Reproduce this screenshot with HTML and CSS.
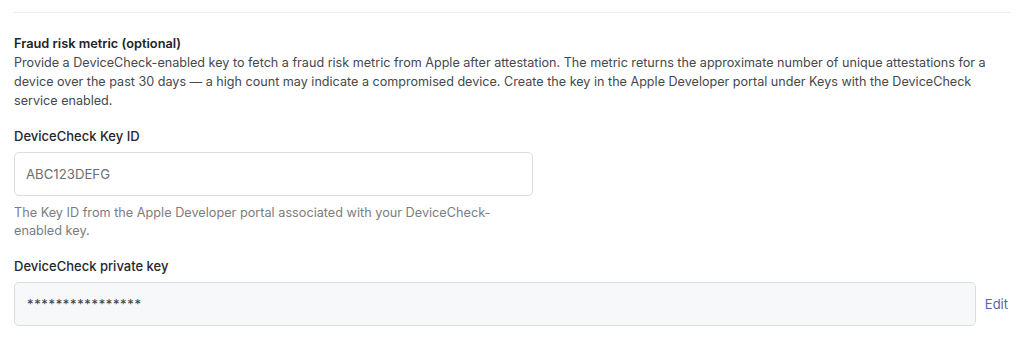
FILE: index.html
```html
<!DOCTYPE html>
<html lang="en">
<head>
<meta charset="utf-8">
<title>Fraud risk metric</title>
<link rel="stylesheet" href="styles.css">
</head>
<body>
<div class="page">
  <hr class="divider">
  <section class="section">
    <h3 class="section-title">Fraud risk metric (optional)</h3>
    <p class="section-desc">Provide a DeviceCheck-enabled key to fetch a fraud risk metric from Apple after attestation. The metric returns the approximate number of unique attestations for a device over the past 30 days — a high count may indicate a compromised device. Create the key in the Apple Developer portal under Keys with the DeviceCheck service enabled.</p>

    <div class="field">
      <label class="field-label">DeviceCheck Key ID</label>
      <div class="input input-short">ABC123DEFG</div>
      <p class="field-help">The Key ID from the Apple Developer portal associated with your DeviceCheck-enabled key.</p>
    </div>

    <div class="field">
      <label class="field-label">DeviceCheck private key</label>
      <div class="input-row">
        <div class="input input-readonly">****************</div>
        <a class="edit-link" href="#">Edit</a>
      </div>
    </div>
  </section>
</div>
</body>
</html>
```

FILE: styles.css
```css
* { box-sizing: border-box; }

html, body {
  margin: 0;
  padding: 0;
  background: #ffffff;
}

body {
  font-family: Inter, "Noto Sans", sans-serif;
  color: #1f2328;
}

.page {
  padding: 12px 14px 0 14px;
}

.divider {
  margin: 0;
  border: 0;
  border-top: 1px solid #ececee;
}

.section {
  padding-top: 21px;
}

.section-title {
  margin: 0;
  font-size: 12.8px;
  line-height: 19px;
  font-weight: 600;
  color: #1f2328;
}

.section-desc {
  margin: 0;
  font-size: 12.6px;
  line-height: 19px;
  color: #45484d;
}

.field {
  margin-top: 17px;
}

.field-label {
  display: block;
  font-size: 13px;
  line-height: 19px;
  font-weight: 500;
  color: #24272b;
  margin-bottom: 6px;
}

.input {
  height: 44px;
  border: 1px solid #dcdde0;
  border-radius: 5px;
  padding: 0 11px;
  display: flex;
  align-items: center;
  font-size: 13.2px;
  color: #6b6e73;
  background: #ffffff;
}

.input-short {
  width: 519px;
}

.field-help {
  margin: 8px 0 0 0;
  max-width: 500px;
  font-size: 12.7px;
  line-height: 18px;
  color: #7a7d82;
}

.input-row {
  display: flex;
  align-items: center;
  gap: 9px;
}

.input-readonly {
  flex: 1;
  background: #f7f8fa;
  color: #3a3d42;
  font-size: 13px;
  letter-spacing: 0.65px;
  padding-left: 12px;
}

.edit-link {
  font-size: 13px;
  color: #5b62b3;
  text-decoration: none;
  margin-right: 2px;
}
```
